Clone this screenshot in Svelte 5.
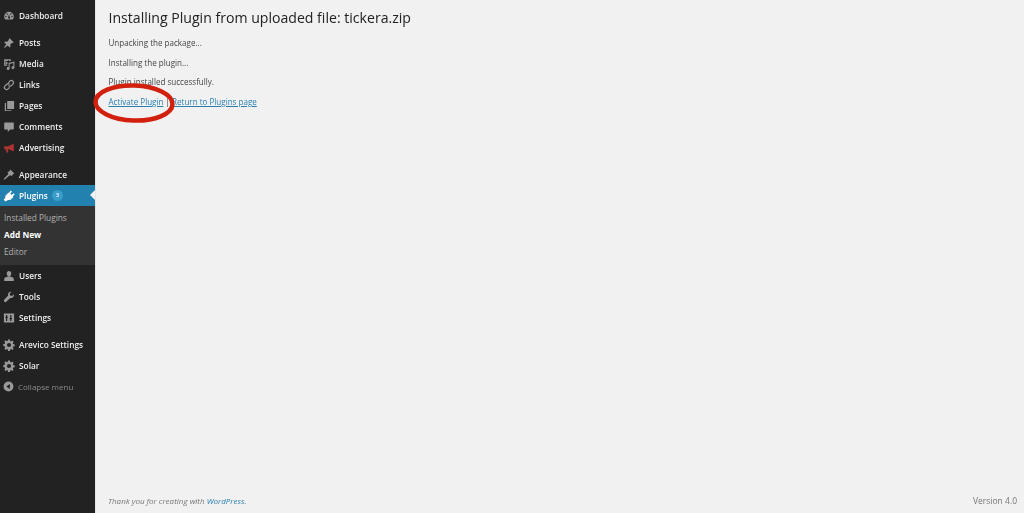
<script>
	const groups = [
		[{ name: 'Dashboard', icon: 'dash' }],
		[
			{ name: 'Posts', icon: 'pin' },
			{ name: 'Media', icon: 'media' },
			{ name: 'Links', icon: 'link' },
			{ name: 'Pages', icon: 'pages' },
			{ name: 'Comments', icon: 'comment' },
			{ name: 'Advertising', icon: 'megaphone' }
		],
		[
			{ name: 'Appearance', icon: 'brush' },
			{ name: 'Plugins', icon: 'plug', current: true, badge: 3 },
			{ name: 'Users', icon: 'user' },
			{ name: 'Tools', icon: 'wrench' },
			{ name: 'Settings', icon: 'sliders' }
		],
		[
			{ name: 'Arevico Settings', icon: 'gear' },
			{ name: 'Solar', icon: 'gear' }
		]
	];
	const submenu = ['Installed Plugins', 'Add New', 'Editor'];
	const steps = ['Unpacking the package...', 'Installing the plugin...', 'Plugin installed successfully.'];
</script>

{#snippet icon(kind)}
	<svg class="icon" class:red={kind === 'megaphone'} viewBox="0 0 20 20" aria-hidden="true">
		{#if kind === 'dash'}
			<path d="M10 3a8 8 0 0 0-8 8c0 2 .7 3.800 2 5h12c1.300-1.200 2-3 2-5a8 8 0 0 0-8-8zM5 12a1.200 1.200 0 1 1 0-2.400A1.200 1.200 0 0 1 5 12zm2-4a1.200 1.200 0 1 1 0-2.400A1.200 1.200 0 0 1 7 8zm4.500 6a1.800 1.800 0 0 1-3-1.600L10 7l1.500 5.400c.3.600.3 1.100 0 1.600zM15 12a1.200 1.200 0 1 1 0-2.400 1.200 1.200 0 0 1 0 2.400zm-2-4a1.200 1.200 0 1 1 0-2.400A1.200 1.200 0 0 1 13 8z" />
		{:else if kind === 'pin'}
			<path d="M11 2l7 7-1.500 1-1-.5-3.500 3 .5 3.500-1.500 1.500-3-3.500L3 18l-1 0 0-1 3.500-5L2 9l1.500-1.500L7 8l3-3.500-.5-1z" />
		{:else if kind === 'media'}
			<path d="M2 2h11v3h-2.500L9 3.500 7.500 5H4v6h3v2H2zM6 6.500a1.800 1.800 0 1 1 0 3.600 1.800 1.800 0 0 1 0-3.600zM19 6v10a2.400 2.400 0 1 1-1.700-2.200V8.500L11 10v7.500a2.400 2.400 0 1 1-1.700-2.200V8.500z" />
		{:else if kind === 'link'}
			<path fill="none" stroke="currentColor" stroke-width="2.200" d="M9 6l2.500-2.500a3.500 3.500 0 0 1 5 5L14 11a3.500 3.500 0 0 1-5 0M11 14l-2.500 2.500a3.500 3.500 0 0 1-5-5L6 9a3.500 3.500 0 0 1 5 0" />
		{:else if kind === 'pages'}
			<path d="M7 1.500h11.500V15H7zM5 5v12h9v1.500H3V5z" />
		{:else if kind === 'comment'}
			<path d="M3 2.500h14a1 1 0 0 1 1 1v9.500a1 1 0 0 1-1 1h-5l-4 4.500V14H3a1 1 0 0 1-1-1V3.500a1 1 0 0 1 1-1z" />
		{:else if kind === 'megaphone'}
			<path d="M18 3v12l-1 .5-8-3.500H8l1 5-1.500 1H6L4.500 12H2V7h6z" />
		{:else if kind === 'brush'}
			<path d="M12 1l7 6.500-3 1.500-1 2.500-3.500-1L2.500 18 1 16.500 9 8.500 7.500 5l3-1z" />
		{:else if kind === 'plug'}
			<path d="M13 1l2 2-3 3 2.500 2.500 3-3 2 2-3 3 .5 1.500-4 4c-1.500 1-3 1-4.500.5L4 19 1 16l3-2.500c-.5-1.500-.5-3 .5-4.500l4-4L10 4.500z" />
		{:else if kind === 'user'}
			<path d="M10 1.500c2.200 0 3.800 1.800 3.800 4.200S12.200 10.500 10 10.500 6.200 8.100 6.200 5.700 7.800 1.500 10 1.500zM2 18.500v-4c1-2 3.500-2.500 5.500-3.500h5c2 1 4.500 1.500 5.500 3.500v4z" />
		{:else if kind === 'wrench'}
			<path d="M18 5.500l-3 3-3-1-1-3 3-3c-2.500-.6-5 1-5.500 3.500-.2 1 0 1.700.2 2.500L2 14.500a2.500 2.500 0 0 0 3.500 3.500l6.500-6.200c3 .8 7.200-2.300 6-6.300z" />
		{:else if kind === 'sliders'}
			<path fill-rule="evenodd" d="M1.500 2.500h17v15h-17zM5 5v3H4v2h1v5h2v-5h1V8H7V5zm7 0v5h-1v2h1v3h2v-3h1v-2h-1V5z" />
		{:else if kind === 'gear'}
			<path fill-rule="evenodd" d="M8.500 1h3l.5 2.500 1.500.6 2.200-1.400 2 2.100-1.400 2.200.6 1.500 2.600.5v3l-2.600.5-.6 1.500 1.400 2.200-2 2-2.200-1.400-1.500.6-.5 2.600h-3l-.5-2.600-1.500-.6-2.200 1.400-2-2 1.400-2.200-.6-1.500L.5 11.500v-3l2.600-.5.6-1.500L2.300 4.300l2-2.100 2.200 1.400L8 3zM10 6.500a3.500 3.500 0 1 0 0 7 3.500 3.500 0 0 0 0-7z" />
		{/if}
	</svg>
{/snippet}

<div class="page">
	<aside class="sidebar">
		{#each groups as group}
			<ul class="group">
				{#each group as item}
					<li class="item" class:current={item.current}>
						{@render icon(item.icon)}
						<span>{item.name}</span>
						{#if item.badge}<span class="badge">{item.badge}</span>{/if}
					</li>
					{#if item.current}
						<li class="submenu">
							{#each submenu as sub}
								<div class="sub" class:active={sub === 'Add New'}>{sub}</div>
							{/each}
						</li>
					{/if}
				{/each}
			</ul>
		{/each}
		<div class="collapse">
			<svg class="icon small" viewBox="0 0 20 20" aria-hidden="true">
				<path fill-rule="evenodd" d="M10 1a9 9 0 1 1 0 18 9 9 0 0 1 0-18zm2.500 4.500L6 10l6.500 4.500z" />
			</svg>
			<span>Collapse menu</span>
		</div>
	</aside>

	<main class="main">
		<div class="content">
			<h2>Installing Plugin from uploaded file: tickera.zip</h2>
			{#each steps as step}
				<p>{step}</p>
			{/each}
			<p class="links">
				<a href="#activate">Activate Plugin</a> | <a href="#plugins">Return to Plugins page</a>
			</p>
			<svg class="circle" viewBox="0 0 84 42" aria-hidden="true">
				<ellipse cx="42" cy="21" rx="38.500" ry="17.500" transform="rotate(2 42 21)" />
			</svg>
		</div>
		<footer class="footer">
			<em>Thank you for creating with <span class="wp">WordPress.</span></em>
			<span class="version">Version 4.0</span>
		</footer>
	</main>
</div>

<style>
	:global(body) {
		margin: 0;
		background: #f1f1f1;
	}

	.page {
		display: flex;
		width: 1024px;
		height: 513px;
		overflow: hidden;
		font-family: 'Open Sans', sans-serif;
		filter: blur(0.45px);
	}

	.sidebar {
		width: 95px;
		flex: none;
		background: #222;
		box-sizing: border-box;
		padding-top: 5px;
	}

	ul {
		list-style: none;
		margin: 0;
		padding: 0;
	}

	.group {
		margin-bottom: 6px;
	}

	.item {
		position: relative;
		display: flex;
		align-items: center;
		height: 21px;
		padding-left: 3px;
		color: #eee;
		font-size: 8.300px;
		font-weight: 600;
	}

	.item.current {
		background: #2381b0;
		color: #fff;
	}

	.item.current::after {
		content: '';
		position: absolute;
		right: 0;
		top: 5px;
		border: 5.500px solid transparent;
		border-right-color: #f1f1f1;
		border-left-width: 0;
	}

	.icon {
		width: 12px;
		height: 12px;
		margin-right: 4px;
		flex: none;
		fill: currentColor;
		color: #999;
	}

	.current .icon {
		color: #fff;
	}

	.icon.red {
		color: #a33;
	}

	.badge {
		display: inline-block;
		width: 11px;
		height: 11px;
		margin-left: 4px;
		border-radius: 50%;
		background: #3a9cc8;
		color: #fff;
		font-size: 6px;
		line-height: 11px;
		text-align: center;
	}

	.submenu {
		height: 59px;
		box-sizing: border-box;
		padding-top: 3px;
		background: #333;
	}

	.sub {
		height: 17px;
		padding-left: 4px;
		color: #b4b4b4;
		font-size: 8.300px;
		line-height: 17px;
	}

	.sub.active {
		color: #fff;
		font-weight: 700;
	}

	.collapse {
		display: flex;
		align-items: center;
		height: 21px;
		margin-top: -6px;
		padding-left: 3px;
		color: #8c8c8c;
		font-size: 8px;
	}

	.icon.small {
		width: 11px;
		height: 11px;
		margin-right: 4px;
	}

	.main {
		flex: 1;
		display: flex;
		flex-direction: column;
		justify-content: space-between;
		box-shadow: inset 1px 0 0 #e4e4e4;
	}

	.content {
		position: relative;
		padding: 9px 0 0 13.500px;
		color: #444;
		font-size: 8.050px;
	}

	h2 {
		margin: 0 0 11px;
		color: #222;
		font-size: 14.100px;
		font-weight: 400;
		line-height: 17px;
	}

	p {
		margin: 0 0 7.700px;
		height: 12px;
		line-height: 12px;
	}

	a {
		color: #2a7fb0;
	}

	.wp {
		color: #2a7fb0;
	}

	.circle {
		position: absolute;
		left: -3px;
		top: 82px;
		width: 84px;
		height: 42px;
		fill: none;
		stroke: #d2200e;
		stroke-width: 4.500;
	}

	.footer {
		display: flex;
		justify-content: space-between;
		padding: 0 7px 6px 13px;
		color: #777;
		font-size: 8px;
		line-height: 12px;
	}

	.version {
		font-size: 8.500px;
	}
</style>
